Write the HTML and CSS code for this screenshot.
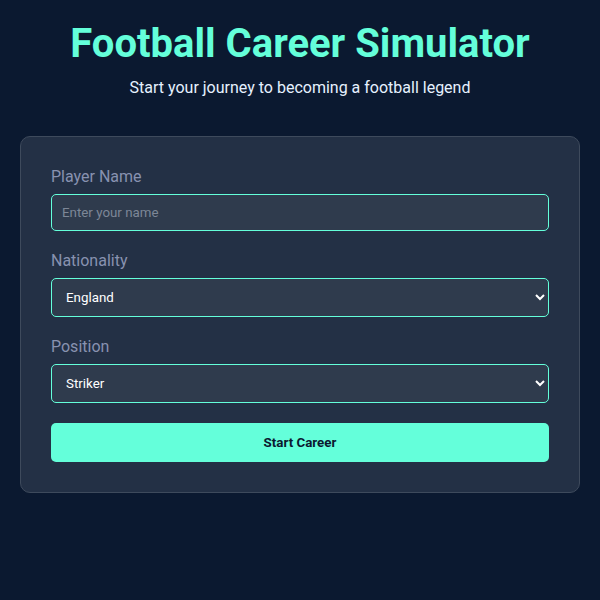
FILE: index.html
```html
<!DOCTYPE html>
<html lang="en">
<head>
<meta charset="utf-8">
<title>Football Career Simulator</title>
<link rel="stylesheet" href="styles.css">
</head>
<body>
  <main class="page">
    <header class="header">
      <h1 class="title">Football Career Simulator</h1>
      <p class="subtitle">Start your journey to becoming a football legend</p>
    </header>
    <form class="card">
      <div class="field">
        <label class="label" for="name">Player Name</label>
        <input class="control" id="name" type="text" placeholder="Enter your name">
      </div>
      <div class="field">
        <label class="label" for="nat">Nationality</label>
        <select class="control select" id="nat">
          <option>England</option>
          <option>Spain</option>
          <option>Brazil</option>
        </select>
      </div>
      <div class="field">
        <label class="label" for="pos">Position</label>
        <select class="control select" id="pos">
          <option>Striker</option>
          <option>Midfielder</option>
          <option>Defender</option>
        </select>
      </div>
      <button class="btn" type="button">Start Career</button>
    </form>
  </main>
</body>
</html>
```
FILE: styles.css
```css
* { box-sizing: border-box; }
html, body { margin: 0; padding: 0; }
body {
  background: #0b1930;
  font-family: Roboto, "Noto Sans", sans-serif;
  color: #e6f1ff;
  min-height: 600px;
}
.page {
  padding: 20px;
}
.header {
  text-align: center;
}
.title {
  margin: 0;
  font-size: 40px;
  font-weight: 700;
  line-height: 47px;
  color: #64ffda;
}
.subtitle {
  margin: 11px 0 0;
  font-size: 16px;
  line-height: 19px;
  color: #e6f1ff;
}
.card {
  margin-top: 39px;
  background: #233045;
  border: 1px solid #3e4a5c;
  border-radius: 10px;
  padding: 30px;
  display: flex;
  flex-direction: column;
  gap: 20px;
}
.field {
  display: flex;
  flex-direction: column;
  gap: 8px;
}
.label {
  font-size: 16px;
  line-height: 19px;
  color: #8892b0;
}
.control {
  font-family: Roboto, "Noto Sans", sans-serif;
  font-size: 13.333px;
  line-height: 16px;
  height: 37px;
  padding: 10px;
  background: #2f3b4d;
  border: 1px solid #64ffda;
  border-radius: 5px;
  color: #ffffff;
  outline: none;
  width: 100%;
}
.control::placeholder { color: #7d8797; }
.select {
  height: 39px;
  padding: 0 10px;
  color-scheme: dark;
}
.btn {
  height: 39px;
  background: #64ffda;
  border: none;
  border-radius: 5px;
  color: #0b1930;
  font-family: Roboto, "Noto Sans", sans-serif;
  font-size: 13.333px;
  font-weight: 700;
}
```
